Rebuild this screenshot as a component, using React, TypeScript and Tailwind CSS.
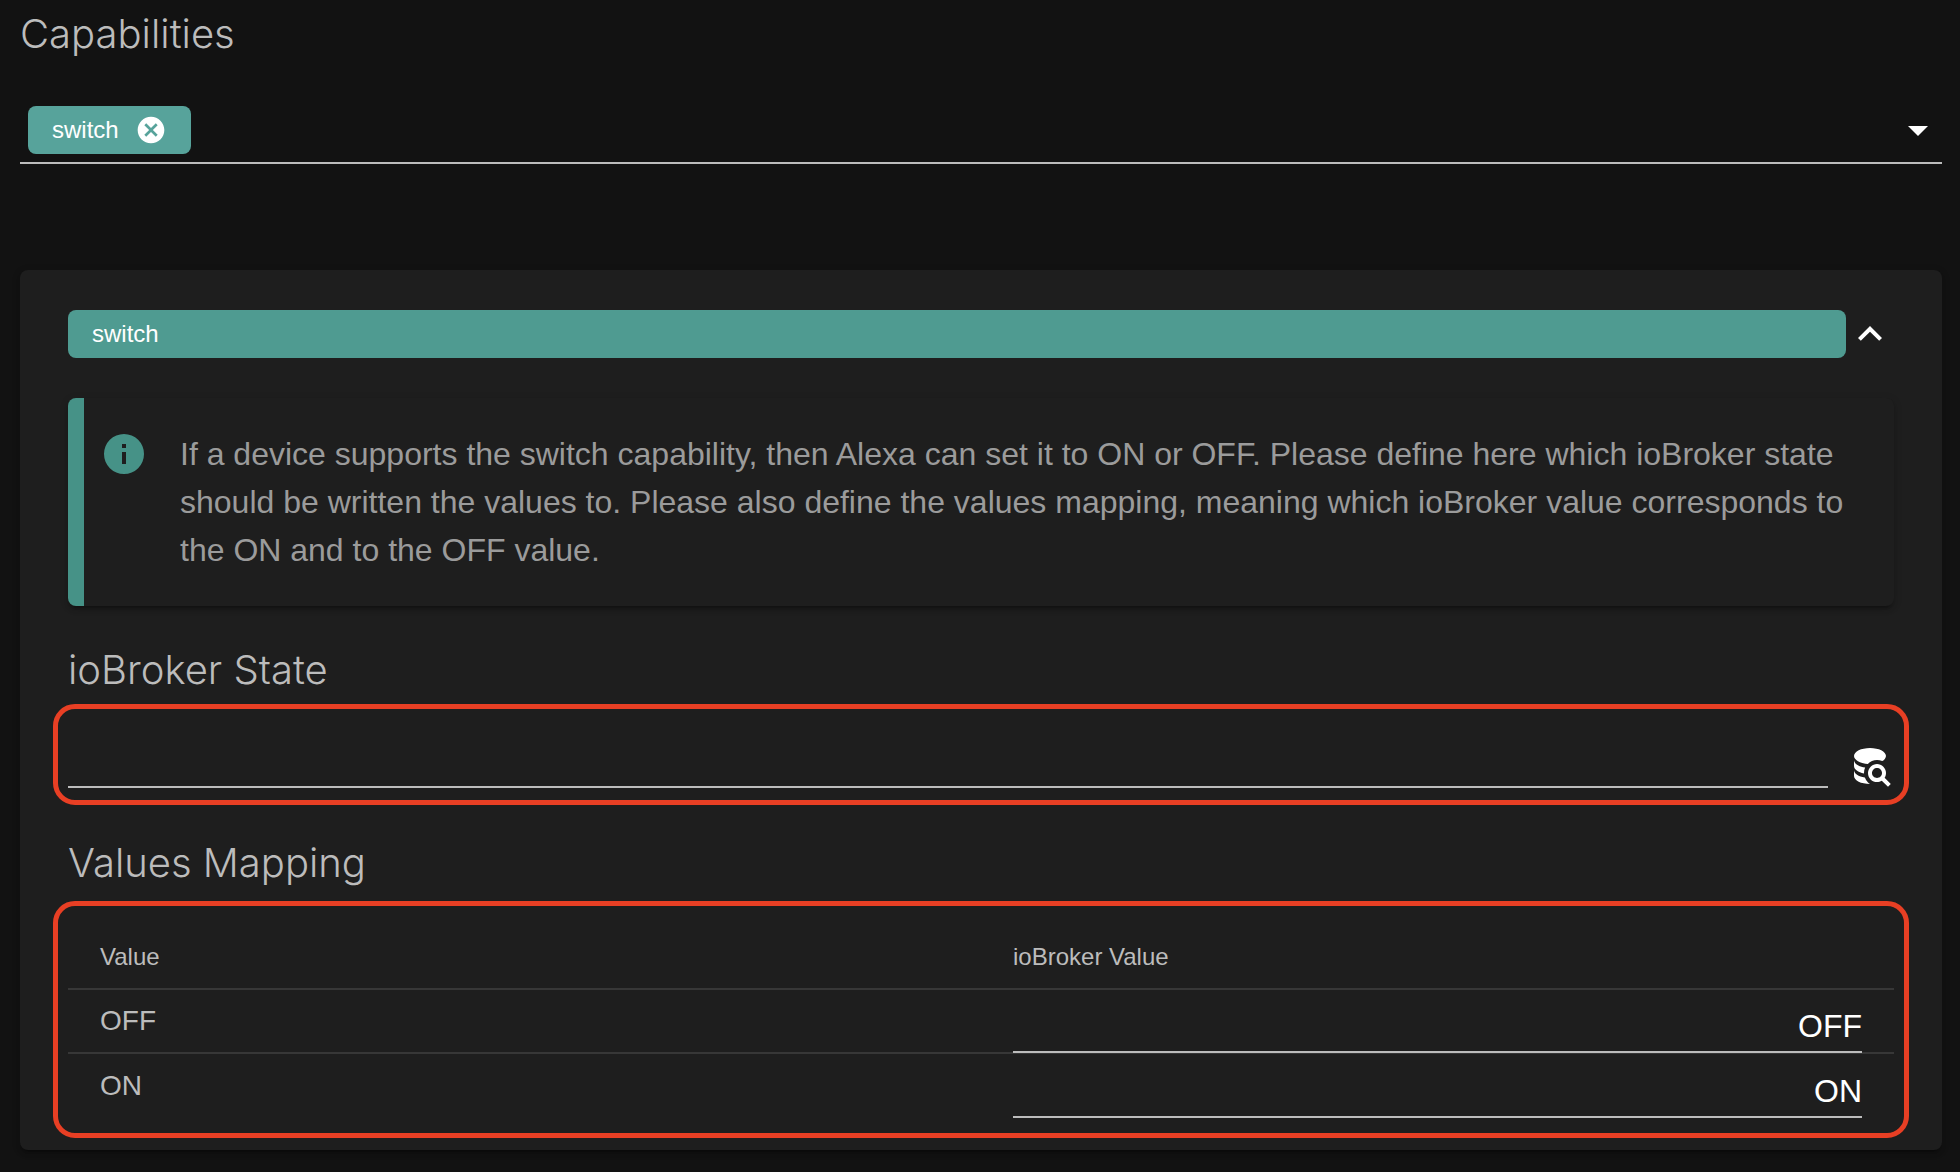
import React from 'react';

function Icon({ d, className }: { d: string; className: string }) {
  return (
    <svg viewBox="0 0 24 24" fill="currentColor" className={className} aria-hidden="true">
      <path d={d} />
    </svg>
  );
}

const paths = {
  menuDown: 'M7,10L12,15L17,10H7Z',
  closeCircle:
    'M12,2C17.53,2 22,6.47 22,12C22,17.53 17.53,22 12,22C6.47,22 2,17.53 2,12C2,6.47 6.47,2 12,2M15.59,7L12,10.59L8.41,7L7,8.41L10.59,12L7,15.59L8.41,17L12,13.41L15.59,17L17,15.59L13.41,12L17,8.41L15.59,7Z',
  chevronUp: 'M7.41,15.41L12,10.83L16.59,15.41L18,14L12,8L6,14L7.41,15.41Z',
  information:
    'M13,9H11V7H13M13,17H11V11H13M12,2A10,10 0 0,0 2,12A10,10 0 0,0 12,22A10,10 0 0,0 22,12A10,10 0 0,0 12,2Z',
  databaseSearch:
    'M18.68,12.32C16.92,10.56 14.07,10.57 12.32,12.33C10.56,14.09 10.56,16.94 12.32,18.69C13.81,20.17 16.11,20.43 17.89,19.32L21,22.39L22.39,21L19.3,17.89C20.43,16.12 20.17,13.8 18.68,12.32M17.27,17.27C16.29,18.25 14.71,18.24 13.73,17.27C12.76,16.29 12.76,14.71 13.74,13.73C14.71,12.76 16.29,12.76 17.27,13.73C18.24,14.71 18.24,16.29 17.27,17.27M10.9,20.1C10.25,19.44 9.74,18.65 9.42,17.78C6.27,17.25 4,15.76 4,14V17C4,19.21 7.58,21 12,21V21C11.6,20.74 11.23,20.44 10.9,20.1M4,9V12C4,13.68 6.07,15.12 9,15.7C9,15.63 9,15.57 9,15.5C9,14.57 9.2,13.65 9.58,12.81C6.34,12.3 4,10.79 4,9M12,3C7.58,3 4,4.79 4,7C4,9 7,10.68 10.85,11H10.9C12.1,9.74 13.76,9 15.5,9C16.41,9 17.31,9.19 18.14,9.56C19.17,9.09 19.87,8.12 20,7C20,4.79 16.42,3 12,3Z',
};

function Heading({ id, children }: { id: string; children: React.ReactNode }) {
  return (
    <h2 id={id} className="font-['Inter',sans-serif] text-[40px] leading-[64px] font-light text-[#bcbcbc]">
      {children}
    </h2>
  );
}

const rows = ['OFF', 'ON'];

export default function App() {
  return (
    <main className="min-h-screen bg-[#121212] pt-[2px] pr-[18px] pb-[22px] pl-5 font-['Liberation_Sans',Arial,sans-serif] text-[#bcbcbc]">
      <Heading id="capabilities">Capabilities</Heading>

      <div className="mt-10 flex items-center border-b-2 border-[#bcbcbc] pb-2 pl-2">
        <span className="flex h-12 items-center gap-4 rounded-lg bg-[#57a39b] px-6 text-2xl text-white">
          switch
          <button type="button" aria-label="Remove switch">
            <Icon d={paths.closeCircle} className="size-8" />
          </button>
        </span>
        <button type="button" aria-label="Open capabilities list" className="ml-auto text-white">
          <Icon d={paths.menuDown} className="size-12" />
        </button>
      </div>

      <section className="mt-[106px] rounded-lg bg-[#1e1e1e] px-12 pt-10 pb-3 shadow-[0_6px_2px_-4px_rgba(0,0,0,0.2),0_4px_4px_0_rgba(0,0,0,0.14),0_2px_10px_0_rgba(0,0,0,0.12)]">
        <div className="flex items-center">
          <div className="flex h-12 flex-1 items-center rounded-lg bg-[#4f9b91] px-6 text-2xl text-white">switch</div>
          <button type="button" aria-label="Collapse switch" className="text-white">
            <Icon d={paths.chevronUp} className="size-12" />
          </button>
        </div>

        <div
          role="note"
          className="mt-10 flex gap-8 rounded-lg border-l-[16px] border-[#469287] bg-[#1e1e1e] py-8 pr-8 pl-4 shadow-[0_6px_2px_-4px_rgba(0,0,0,0.2),0_4px_4px_0_rgba(0,0,0,0.14),0_2px_10px_0_rgba(0,0,0,0.12)]"
        >
          <Icon d={paths.information} className="size-12 shrink-0 text-[#469287]" />
          <p className="text-[32px] leading-[48px] text-[#9b9b9b]">
            If a device supports the switch capability, then Alexa can set it to ON or OFF. Please define here which
            ioBroker state should be written the values to. Please also define the values mapping, meaning which
            ioBroker value corresponds to the ON and to the OFF value.
          </p>
        </div>

        <div className="mt-8">
          <Heading id="state">ioBroker State</Heading>
        </div>
        <div className="-mx-[15px] mt-[2px] flex items-end gap-[18px] rounded-[22px] border-[5px] border-[#e83f24] px-[10px] pb-[10px]">
          <input
            type="text"
            aria-labelledby="state"
            className="mb-[2px] h-[79px] min-w-0 flex-1 border-b-2 border-[#bcbcbc] bg-transparent pt-6 text-[32px] text-white outline-none"
          />
          <button type="button" aria-label="Select state" className="text-white">
            <Icon d={paths.databaseSearch} className="size-12" />
          </button>
        </div>

        <div className="mt-[26px]">
          <Heading id="mapping">Values Mapping</Heading>
        </div>
        <div className="-mx-[15px] mt-[6px] rounded-[22px] border-[5px] border-[#e83f24] px-[10px] pt-5 pb-[14px]">
          <table aria-labelledby="mapping" className="w-full table-fixed border-separate border-spacing-0 text-left">
            <thead>
              <tr>
                <th className="h-16 border-b-2 border-[#373737] px-8 text-2xl font-normal">Value</th>
                <th className="h-16 border-b-2 border-[#373737] px-8 text-2xl font-normal">ioBroker Value</th>
              </tr>
            </thead>
            <tbody>
              {rows.map((row) => (
                <tr key={row} className="group">
                  <td className="h-16 border-b-2 border-[#373737] px-8 py-0 text-[28px] leading-10 group-last:h-[65px] group-last:border-transparent">
                    {row}
                  </td>
                  <td className="h-16 border-b-2 border-[#373737] px-8 py-0 align-bottom group-last:h-[65px] group-last:border-transparent">
                    <input
                      type="text"
                      defaultValue={row}
                      aria-label={'ioBroker value for ' + row}
                      className="-mb-px block h-[55px] w-full border-b-2 border-[#bcbcbc] bg-transparent pt-1 text-right text-[32px] text-white outline-none"
                    />
                  </td>
                </tr>
              ))}
            </tbody>
          </table>
        </div>
      </section>
    </main>
  );
}
